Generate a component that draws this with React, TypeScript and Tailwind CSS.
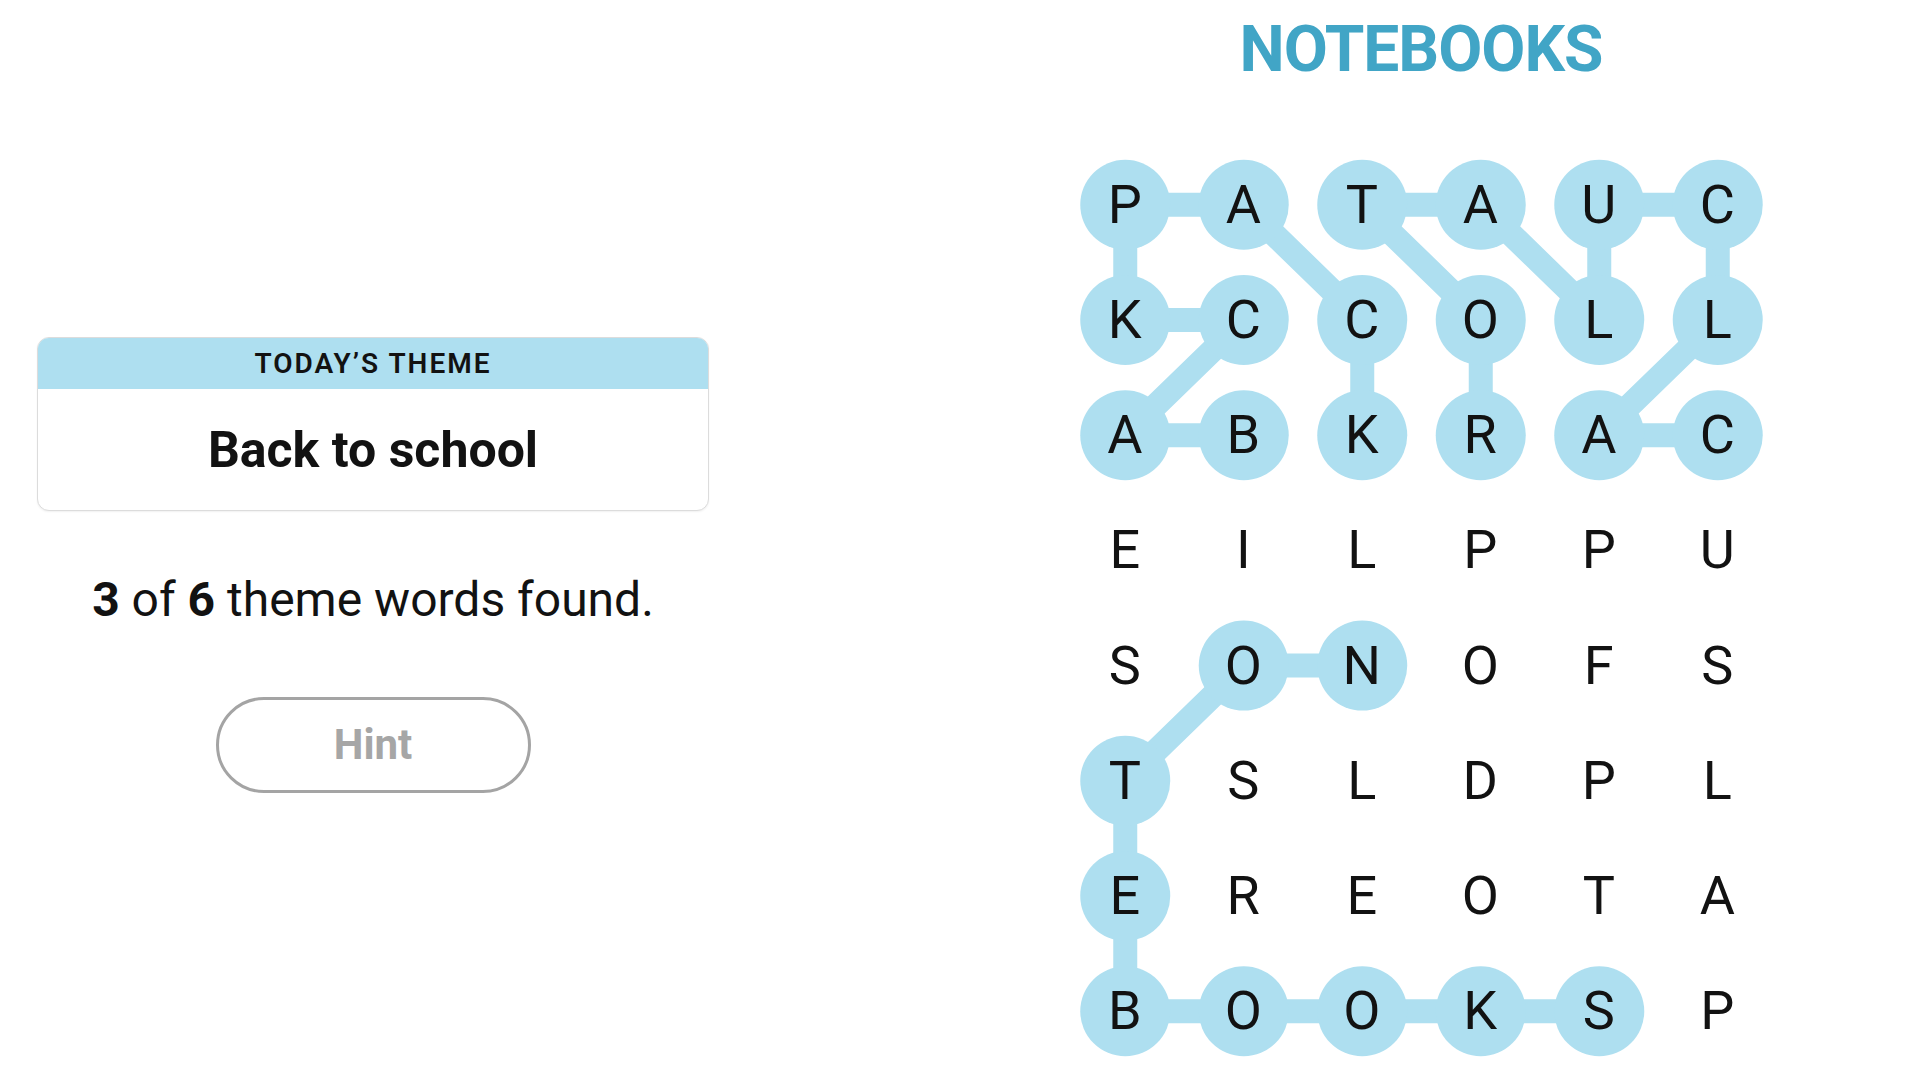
import React from "react";

const GRID = ["PATAUC", "KCCOLL", "ABKRAC", "EILPPU", "SONOFS", "TSLDPL", "EREOTA", "BOOKSP"];

const WORDS: number[][][] = [
  [[2, 1], [2, 0], [1, 1], [1, 0], [0, 0], [0, 1], [1, 2], [2, 2]],
  [[2, 5], [2, 4], [1, 5], [0, 5], [0, 4], [1, 4], [0, 3], [0, 2], [1, 3], [2, 3]],
  [[4, 2], [4, 1], [5, 0], [6, 0], [7, 0], [7, 1], [7, 2], [7, 3], [7, 4]],
];

const CW = 118.5;
const CH = 115.2;
const cx = (c: number) => c * CW + CW / 2;
const cy = (r: number) => r * CH + CH / 2;

function Board() {
  return (
    <div className="relative w-[711px] h-[922px]">
      <svg
        className="absolute inset-0"
        width="711"
        height="922"
        viewBox="0 0 711 921.6"
      >
        {WORDS.map((w, i) => (
          <g key={i}>
            <polyline
              points={w.map(([r, c]) => `${cx(c)},${cy(r)}`).join(" ")}
              fill="none"
              stroke="#aedff0"
              strokeWidth={24}
              strokeLinejoin="round"
              strokeLinecap="round"
            />
            {w.map(([r, c]) => (
              <circle key={`${r}-${c}`} cx={cx(c)} cy={cy(r)} r={45} fill="#aedff0" />
            ))}
          </g>
        ))}
      </svg>
      <div className="relative grid grid-cols-6 grid-rows-8 w-full h-full">
        {GRID.map((row, r) =>
          row.split("").map((ch, c) => (
            <div
              key={`${r}-${c}`}
              className="flex items-center justify-center text-[54px] leading-none text-[#121212]"
            >
              {ch}
            </div>
          ))
        )}
      </div>
    </div>
  );
}

export default function App() {
  return (
    <div className="w-[1920px] h-[1080px] bg-white flex overflow-hidden font-['Roboto','Liberation_Sans',sans-serif] text-[#121212]">
      <div className="w-[746px] shrink-0 pt-[337px] px-[37px] flex flex-col items-center">
        <div className="w-full rounded-[12px] border border-[#dcdcdc] shadow-[0_1px_2px_rgba(0,0,0,0.06)] overflow-hidden bg-white">
          <div className="h-[51px] bg-[#aedff0] flex items-center justify-center text-[28px] leading-none font-semibold tracking-[2px] uppercase">
            Today’s Theme
          </div>
          <div className="h-[121px] flex items-center justify-center text-[50px] leading-none font-bold">
            Back to school
          </div>
        </div>
        <div className="mt-[65px] text-[48px] leading-none">
          <span className="font-bold">3</span> of <span className="font-bold">6</span> theme words found.
        </div>
        <button className="mt-[73px] w-[315px] h-[96px] rounded-full border-[3px] border-[#a4a4a4] bg-white flex items-center justify-center text-[42px] leading-none font-bold text-[#a6a6a6]">
          Hint
        </button>
      </div>
      <div className="flex-1 ml-[176px] pt-[18px] flex flex-col items-center">
        <div className="text-[64px] leading-none font-bold text-[#41a5c6] tracking-[-1px]">NOTEBOOKS</div>
        <div className="mt-[65px]">
          <Board />
        </div>
      </div>
    </div>
  );
}
